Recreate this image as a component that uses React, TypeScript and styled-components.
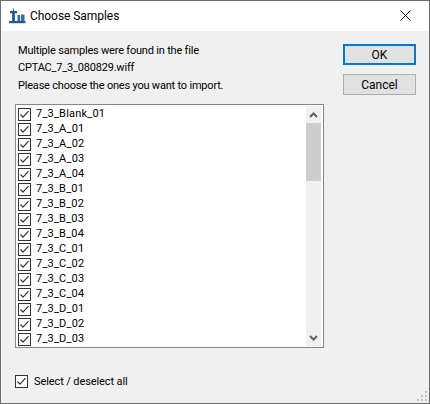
import React from "react";
import styled, { createGlobalStyle } from "styled-components";

const Global = createGlobalStyle`
  html, body { margin: 0; padding: 0; background: #f0f0f0; }
  * { box-sizing: border-box; }
`;

const Window = styled.div`
  position: relative;
  width: 430px;
  height: 404px;
  border: 1px solid #6e6e6e;
  background: #f0f0f0;
  font-family: "Roboto", "Liberation Sans", Arial, sans-serif;
  font-size: 11px;
  color: #000;
  display: flex;
  flex-direction: column;
`;

const TitleBar = styled.div`
  height: 30px;
  background: #fff;
  display: flex;
  align-items: center;
  padding: 0 0 1px 8px;
  flex: none;
`;

const TitleText = styled.span`
  margin-left: 4px;
  font-size: 12px;
  letter-spacing: -0.05px;
`;

const CloseButton = styled.div`
  margin-left: auto;
  width: 45px;
  height: 30px;
  display: flex;
  align-items: center;
  justify-content: center;
  padding-right: 2px;
`;

const Body = styled.div`
  flex: 1;
  display: flex;
  flex-direction: column;
  padding: 11px 13px 0 14px;
`;

const Top = styled.div`
  display: flex;
  justify-content: space-between;
  height: 62px;
`;

const Message = styled.div`
  line-height: 17.4px;
  padding: 0 0 0 3px;
  letter-spacing: -0.2px;
`;

const Buttons = styled.div`
  display: flex;
  flex-direction: column;
  gap: 9px;
  padding-top: 2px;
`;

const Button = styled.div<{ $primary?: boolean }>`
  width: 73px;
  height: 21px;
  background: #e1e1e1;
  border: ${(p) => (p.$primary ? "2px solid #0078d7" : "1px solid #adadad")};
  display: flex;
  align-items: center;
  justify-content: center;
  font-size: 12px;
`;

const ListBox = styled.div`
  width: 309px;
  height: 244px;
  background: #fff;
  border: 1px solid #828790;
  display: flex;
  overflow: hidden;
`;

const Items = styled.div`
  flex: 1;
  padding: 2px 0 0 2px;
  overflow: hidden;
`;

const Row = styled.div`
  height: 15px;
  display: flex;
  align-items: center;
  gap: 5px;
`;

const RowLabel = styled.span`
  position: relative;
  top: -1px;
  letter-spacing: 0.2px;
`;

const Box = styled.span`
  width: 13px;
  height: 13px;
  border: 1px solid #333;
  background: #fff;
  display: inline-flex;
  flex: none;
`;

const Scrollbar = styled.div`
  width: 15px;
  margin: 1px 2px 1px 0;
  background: #f0f0f0;
  display: flex;
  flex-direction: column;
`;

const ScrollArrow = styled.div`
  height: 17px;
  display: flex;
  align-items: center;
  justify-content: center;
  flex: none;
`;

const ScrollTrack = styled.div`
  flex: 1;
`;

const Thumb = styled.div`
  height: 58px;
  background: #cdcdcd;
`;

const SelectAll = styled.div`
  display: flex;
  align-items: center;
  gap: 6px;
  margin-top: 27px;
  letter-spacing: -0.1px;
`;

const Grip = styled.svg`
  position: absolute;
  right: 1px;
  bottom: 1px;
`;

const Check = () => (
  <svg width="11" height="11" viewBox="0 0 11 11">
    <path d="M1.5 5.5 L4 8.2 L9.5 2.2" fill="none" stroke="#333" strokeWidth="1.2" />
  </svg>
);

const AppIcon = () => (
  <svg width="17" height="17" viewBox="0 0 17 17">
    <path d="M0 14h16.5v2.2H0z" fill="#1d5a96" />
    <path d="M4.5 .5 L5.2 4 H8 V6.2 H5.9 V14 H3.1 V6.2 H1 V4 H3.8z" fill="#1d5a96" />
    <path d="M8.5 8h2.7v6H8.5zM12 7.5h3.5V14H12z" fill="#2f6ea8" />
  </svg>
);

const names = [
  "7_3_Blank_01", "7_3_A_01", "7_3_A_02", "7_3_A_03", "7_3_A_04",
  "7_3_B_01", "7_3_B_02", "7_3_B_03", "7_3_B_04",
  "7_3_C_01", "7_3_C_02", "7_3_C_03", "7_3_C_04",
  "7_3_D_01", "7_3_D_02", "7_3_D_03",
];

export default function App() {
  return (
    <>
      <Global />
      <Window>
        <TitleBar>
          <AppIcon />
          <TitleText>Choose Samples</TitleText>
          <CloseButton>
            <svg width="11" height="11" viewBox="0 0 11 11">
              <path d="M0.5 0.5 L10.5 10.5 M10.5 0.5 L0.5 10.5" stroke="#111" strokeWidth="1" fill="none" />
            </svg>
          </CloseButton>
        </TitleBar>
        <Body>
          <Top>
            <Message>
              <div>Multiple samples were found in the file</div>
              <div>CPTAC_7_3_080829.wiff</div>
              <div>Please choose the ones you want to import.</div>
            </Message>
            <Buttons>
              <Button $primary>OK</Button>
              <Button>Cancel</Button>
            </Buttons>
          </Top>
          <ListBox>
            <Items>
              {names.map((n) => (
                <Row key={n}>
                  <Box><Check /></Box>
                  <RowLabel>{n}</RowLabel>
                </Row>
              ))}
            </Items>
            <Scrollbar>
              <ScrollArrow>
                <svg width="9" height="6" viewBox="0 0 9 6"><path d="M1 5 L4.5 1.5 L8 5" fill="none" stroke="#606060" strokeWidth="2" /></svg>
              </ScrollArrow>
              <ScrollTrack><Thumb /></ScrollTrack>
              <ScrollArrow>
                <svg width="9" height="6" viewBox="0 0 9 6"><path d="M1 1 L4.5 4.5 L8 1" fill="none" stroke="#606060" strokeWidth="2" /></svg>
              </ScrollArrow>
            </Scrollbar>
          </ListBox>
          <SelectAll>
            <Box><Check /></Box>
            <span>Select / deselect all</span>
          </SelectAll>
        </Body>
        <Grip width="12" height="12" viewBox="0 0 12 12">
          <path d="M9 1h2v2H9zM5 5h2v2H5zM9 5h2v2H9zM1 9h2v2H1zM5 9h2v2H5zM9 9h2v2H9z" fill="#bfbfbf" />
        </Grip>
      </Window>
    </>
  );
}
